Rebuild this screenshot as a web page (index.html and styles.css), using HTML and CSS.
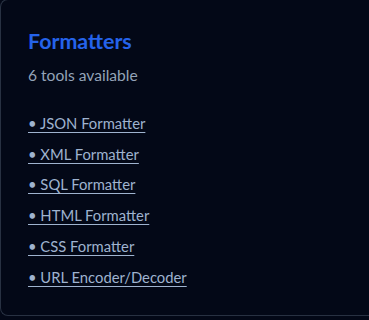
FILE: index.html
```html
<!DOCTYPE html>
<html>
<head>
<meta charset="utf-8">
<link rel="stylesheet" href="styles.css">
</head>
<body>
<div class="card">
  <h2 class="title">Formatters</h2>
  <p class="count">6 tools available</p>
  <ul class="tools">
    <li><a href="#">• JSON Formatter</a></li>
    <li><a href="#">• XML Formatter</a></li>
    <li><a href="#">• SQL Formatter</a></li>
    <li><a href="#">• HTML Formatter</a></li>
    <li><a href="#">• CSS Formatter</a></li>
    <li><a href="#">• URL Encoder/Decoder</a></li>
  </ul>
</div>
</body>
</html>
```
FILE: styles.css
```css
html, body {
  margin: 0;
  padding: 0;
  background: #030817;
  overflow: hidden;
  font-family: Lato, "Noto Sans", sans-serif;
}
.card {
  box-sizing: border-box;
  width: 369px;
  height: 317px;
  margin-top: -1px;
  border: 1px solid #283142;
  border-right: none;
  border-radius: 8px 0 0 8px;
  background: #030817;
  padding: 27px 27px 0;
}
.title {
  margin: 0;
  font-size: 21.4px;
  line-height: 28px;
  font-weight: 700;
  color: #2563eb;
}
.count {
  margin: 8px 0 0;
  font-size: 15.6px;
  line-height: 24px;
  color: #94a3b8;
}
.tools {
  list-style: none;
  margin: 21px 0 0;
  padding: 0;
  display: flex;
  flex-direction: column;
}
.tools li {
  font-size: 14.8px;
  line-height: 30.7px;
}
.tools a {
  color: #9fb3cf;
  text-decoration: underline;
  text-underline-offset: 3px;
}
```
